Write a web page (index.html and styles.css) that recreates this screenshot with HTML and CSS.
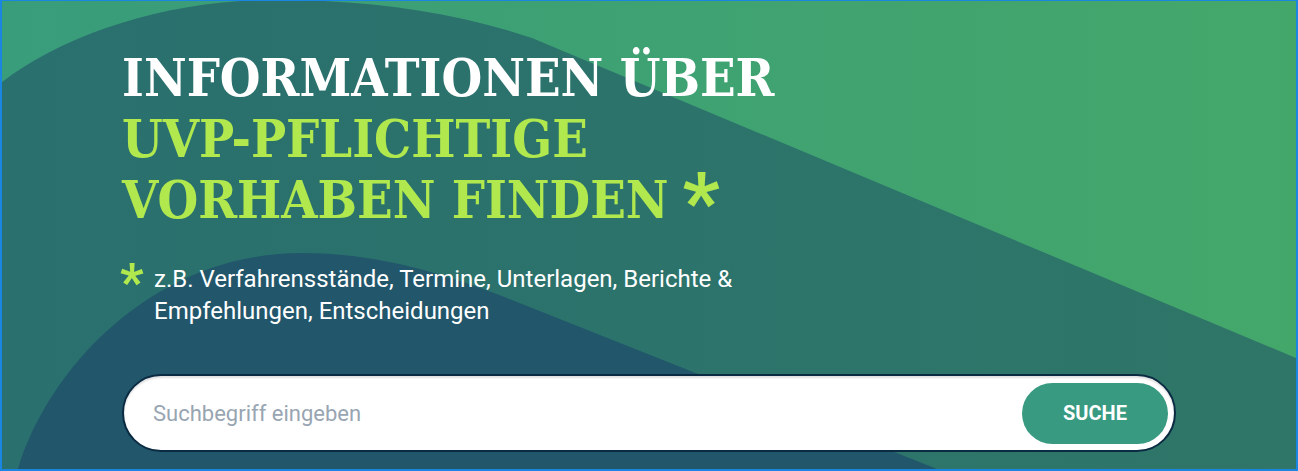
FILE: index.html
```html
<!DOCTYPE html>
<html lang="de">
<head>
<meta charset="utf-8">
<title>UVP Suche</title>
<link rel="stylesheet" href="styles.css">
</head>
<body>
<main class="hero">
  <svg class="hero-bg" viewBox="0 0 1294 468" preserveAspectRatio="none" aria-hidden="true">
    <defs>
      <linearGradient id="base" x1="0" y1="0" x2="1" y2="0">
        <stop offset="0" stop-color="#399c7b"/>
        <stop offset="1" stop-color="#44a76a"/>
      </linearGradient>
      <linearGradient id="teal" x1="0" y1="0" x2="1" y2="0">
        <stop offset="0" stop-color="#29706f"/>
        <stop offset="1" stop-color="#2f7668"/>
      </linearGradient>
    </defs>
    <rect x="0" y="0" width="1294" height="468" fill="url(#base)"/>
    <path d="M0,81 C60,35 160,0 265,-1 C360,-2 450,10 530,37 L1294,357 L1294,468 L0,468 Z" fill="url(#teal)"/>
    <path d="M16,468 C45,370 150,252 300,252 C380,252 450,275 520,303 L935,468 Z" fill="#22566b"/>
  </svg>

  <div class="content">
    <h1 class="title">
      <span class="title-white">INFORMATIONEN ÜBER</span>
      <span class="title-lime">UVP-PFLICHTIGE</span>
      <span class="title-lime">VORHABEN FINDEN<span class="title-star">*</span></span>
    </h1>

    <div class="note">
      <span class="note-star">*</span>
      <p class="note-text">z.B. Verfahrensstände, Termine, Unterlagen, Berichte &amp; Empfehlungen, Entscheidungen</p>
    </div>

    <form class="search">
      <input class="search-input" type="text" placeholder="Suchbegriff eingeben">
      <button class="search-btn" type="button">SUCHE</button>
    </form>
  </div>
</main>
</body>
</html>
```
FILE: styles.css
```css
* { box-sizing: border-box; }

html, body {
  margin: 0;
  padding: 0;
}

body {
  width: 1298px;
  height: 471px;
  overflow: hidden;
  font-family: Roboto, "Liberation Sans", sans-serif;
}

.hero {
  position: relative;
  width: 1298px;
  height: 471px;
  border: 2px solid #1a86e2;
  border-top-width: 1px;
  overflow: hidden;
}

.hero-bg {
  position: absolute;
  left: 0;
  top: 0;
  width: 100%;
  height: 100%;
  display: block;
}

.content {
  position: relative;
  padding: 46px 120px 0 120px;
  display: flex;
  flex-direction: column;
}

.title {
  margin: 0;
  font-family: "DejaVu Serif Condensed", "DejaVu Serif", serif;
  font-stretch: condensed;
  font-weight: 700;
  font-size: 52px;
  line-height: 61px;
  letter-spacing: 0;
  display: flex;
  flex-direction: column;
}

.title-white { color: #ffffff; }
.title-lime { color: #b0e84e; }

.title-star {
  display: inline-block;
  font-family: Roboto, sans-serif;
  font-size: 82px;
  font-weight: 700;
  line-height: 54px;
  height: 60px;
  padding-top: 6px;
  vertical-align: top;
  margin-left: 14px;
}

.note {
  margin-top: 33px;
  display: flex;
  align-items: flex-start;
  gap: 8px;
}

.note-star {
  color: #b0e84e;
  font-family: Roboto, sans-serif;
  font-weight: 700;
  font-size: 52px;
  line-height: 40px;
  width: 24px;
  margin-left: -2px;
  margin-right: 2px;
}

.note-text {
  margin: 0;
  color: #ffffff;
  font-size: 24px;
  line-height: 32px;
  max-width: 620px;
}

.search {
  margin-top: 47px;
  width: 1054px;
  height: 78px;
  display: flex;
  align-items: center;
  background: #ffffff;
  border: 2px solid #0b2b42;
  border-radius: 39px;
  padding: 0 6px 0 27px;
  box-shadow: inset 0 2px 2px rgba(0, 0, 0, 0.12);
}

.search-input {
  flex: 1;
  border: 0;
  outline: 0;
  background: transparent;
  font-family: Roboto, sans-serif;
  font-size: 22px;
  color: #333;
}

.search-input::placeholder { color: #98a5b2; }

.search-btn {
  width: 146px;
  height: 61px;
  border: 0;
  border-radius: 31px;
  background: #379a81;
  color: #ffffff;
  font-family: Roboto, sans-serif;
  font-weight: 700;
  font-size: 20px;
  letter-spacing: 0;
}
```
